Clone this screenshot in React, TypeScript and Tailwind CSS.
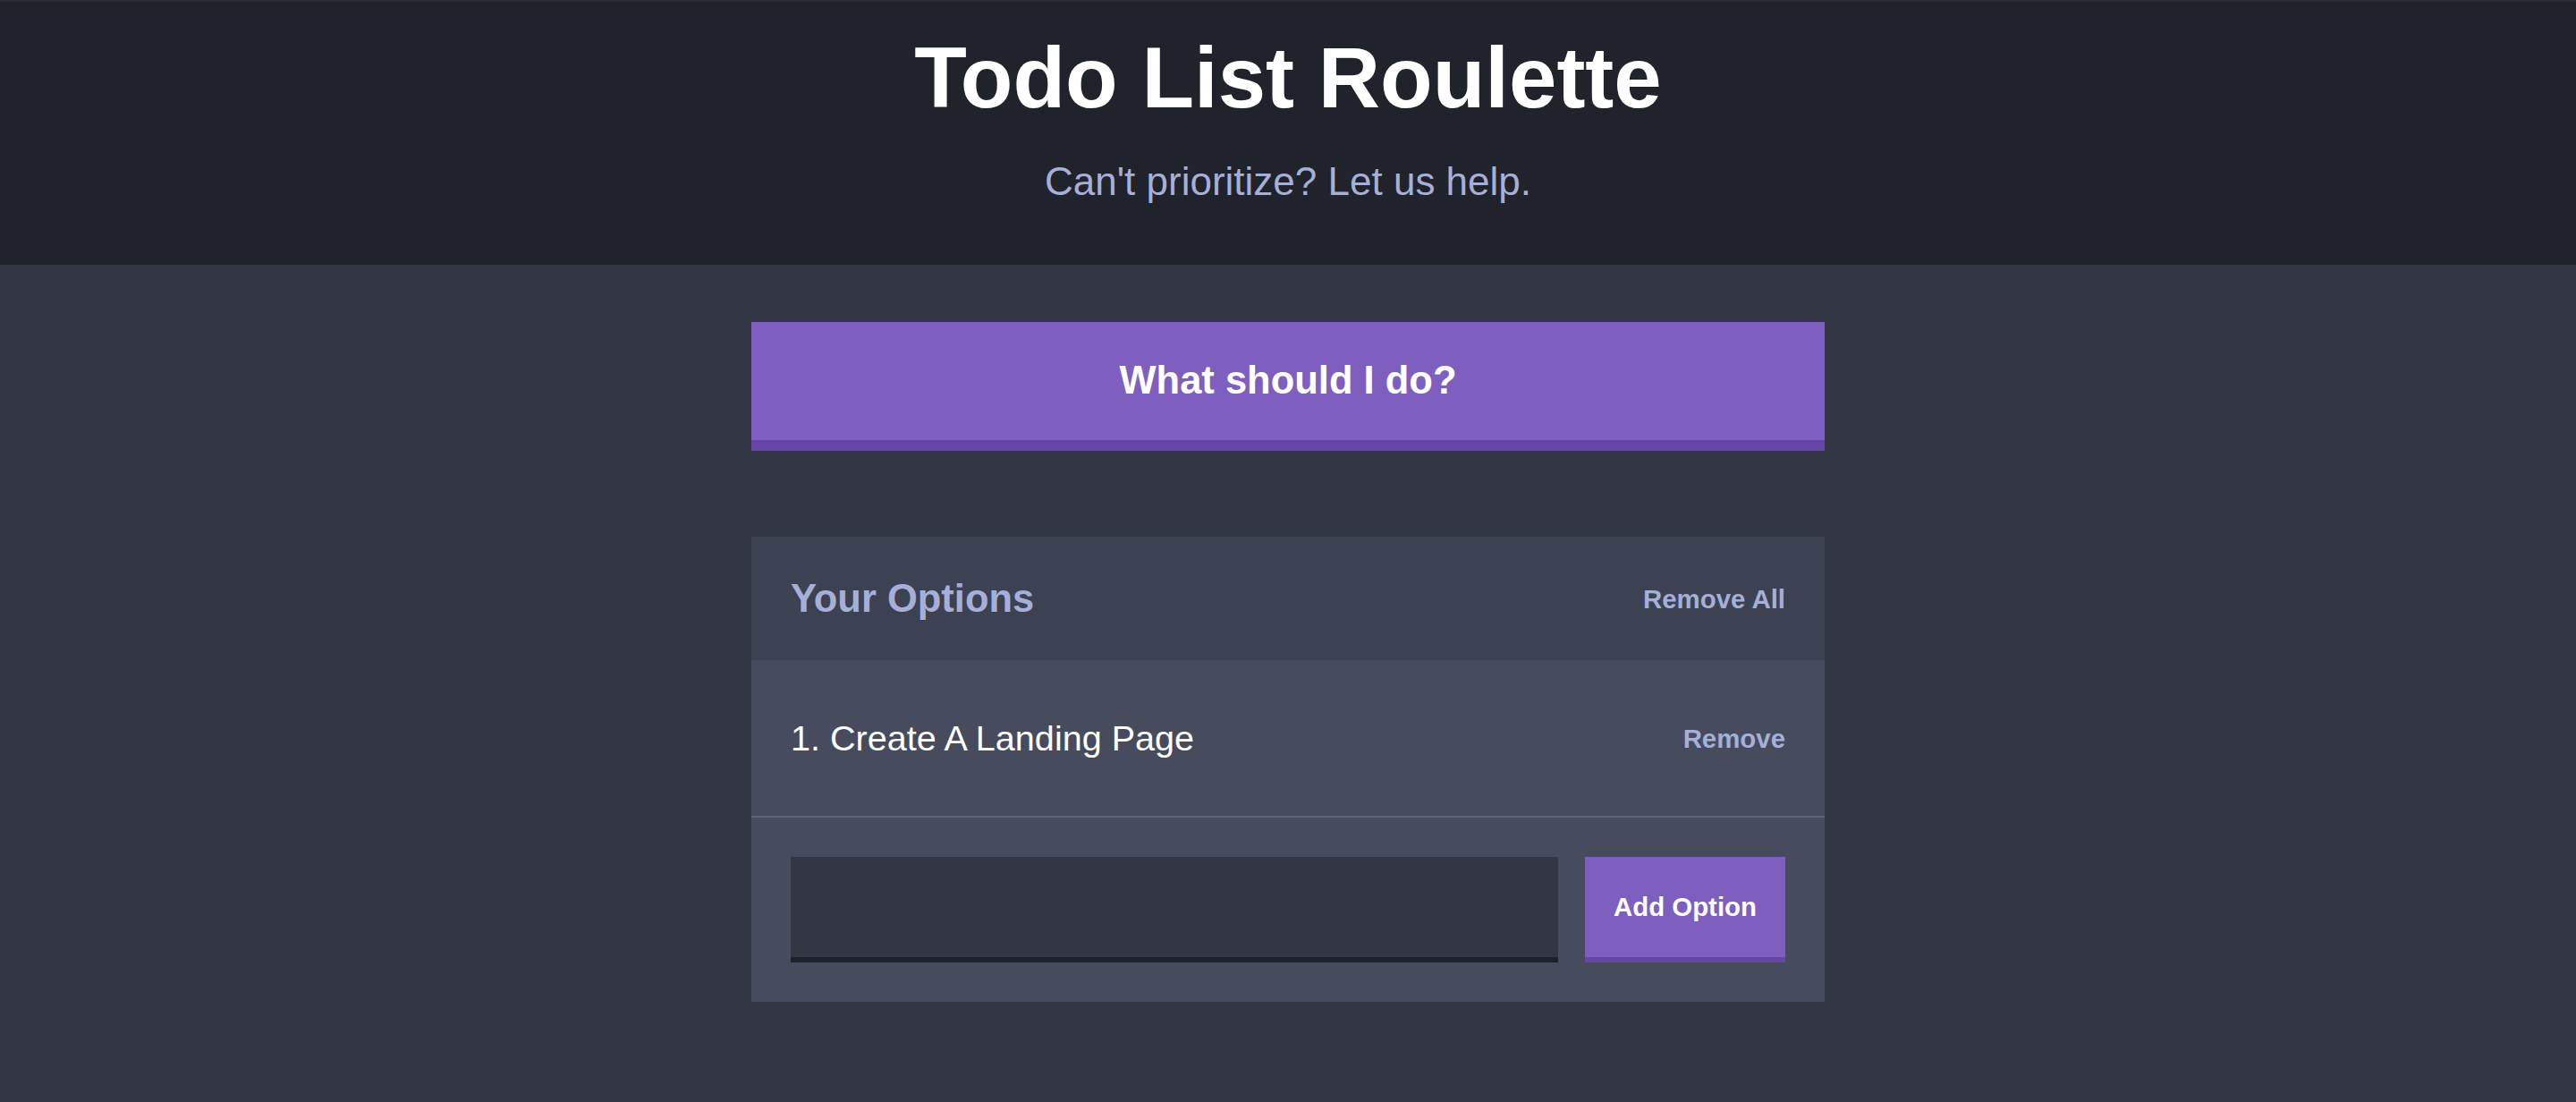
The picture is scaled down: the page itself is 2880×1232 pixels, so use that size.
const options = ['Create A Landing Page'];

const App = () => {
  return (
    <div className="min-h-screen bg-[#333745] font-['Liberation_Sans',Arial,sans-serif]">
      <header className="bg-[#20232b] border-t-2 border-[#2b2c2f] h-[296px] flex flex-col items-center pt-[37px]">
        <h1 className="text-white text-[96px] leading-[96px] font-bold">Todo List Roulette</h1>
        <h2 className="text-[#a5afd7] text-[44px] leading-[44px] mt-[46px]">
          Can't prioritize? Let us help.
        </h2>
      </header>

      <main className="w-[1200px] mx-auto pt-16">
        <button className="w-full h-[144px] bg-[#7e5ebf] border-b-[12px] border-[#6445a5] text-white text-[43.5px] leading-none font-bold flex items-center justify-center">
          What should I do?
        </button>

        <div className="mt-24 bg-[#464b5e]">
          <div className="h-[138px] bg-[#3c4251] flex items-center justify-between px-[44px]">
            <h3 className="text-[#a5afd7] text-[43.5px] font-bold leading-none pt-[2px]">Your Options</h3>
            <button className="text-[#a5afd7] text-[29.4px] font-bold leading-none pt-[2px]">Remove All</button>
          </div>

          {options.map((option, i) => (
            <div
              key={option}
              className="h-[176px] border-b-2 border-[#5f6478] flex items-center justify-between px-[44px]"
            >
              <p className="text-white text-[39.6px] leading-none pt-[2px]">
                {i + 1}. {option}
              </p>
              <button className="text-[#a5afd7] text-[29.4px] font-bold leading-none pt-[2px]">Remove</button>
            </div>
          ))}

          <form className="flex gap-[30px] p-[44px]" onSubmit={(e) => e.preventDefault()}>
            <input
              type="text"
              className="flex-1 h-[118px] bg-[#333745] border-b-[6px] border-[#1f2129] text-[#a5afd7] text-[29px] px-6 outline-none"
            />
            <button className="w-[224px] h-[118px] bg-[#7e5ebf] border-b-[6px] border-[#6445a5] text-white text-[29.4px] font-bold leading-none">
              Add Option
            </button>
          </form>
        </div>
      </main>
    </div>
  );
};

export default App;
